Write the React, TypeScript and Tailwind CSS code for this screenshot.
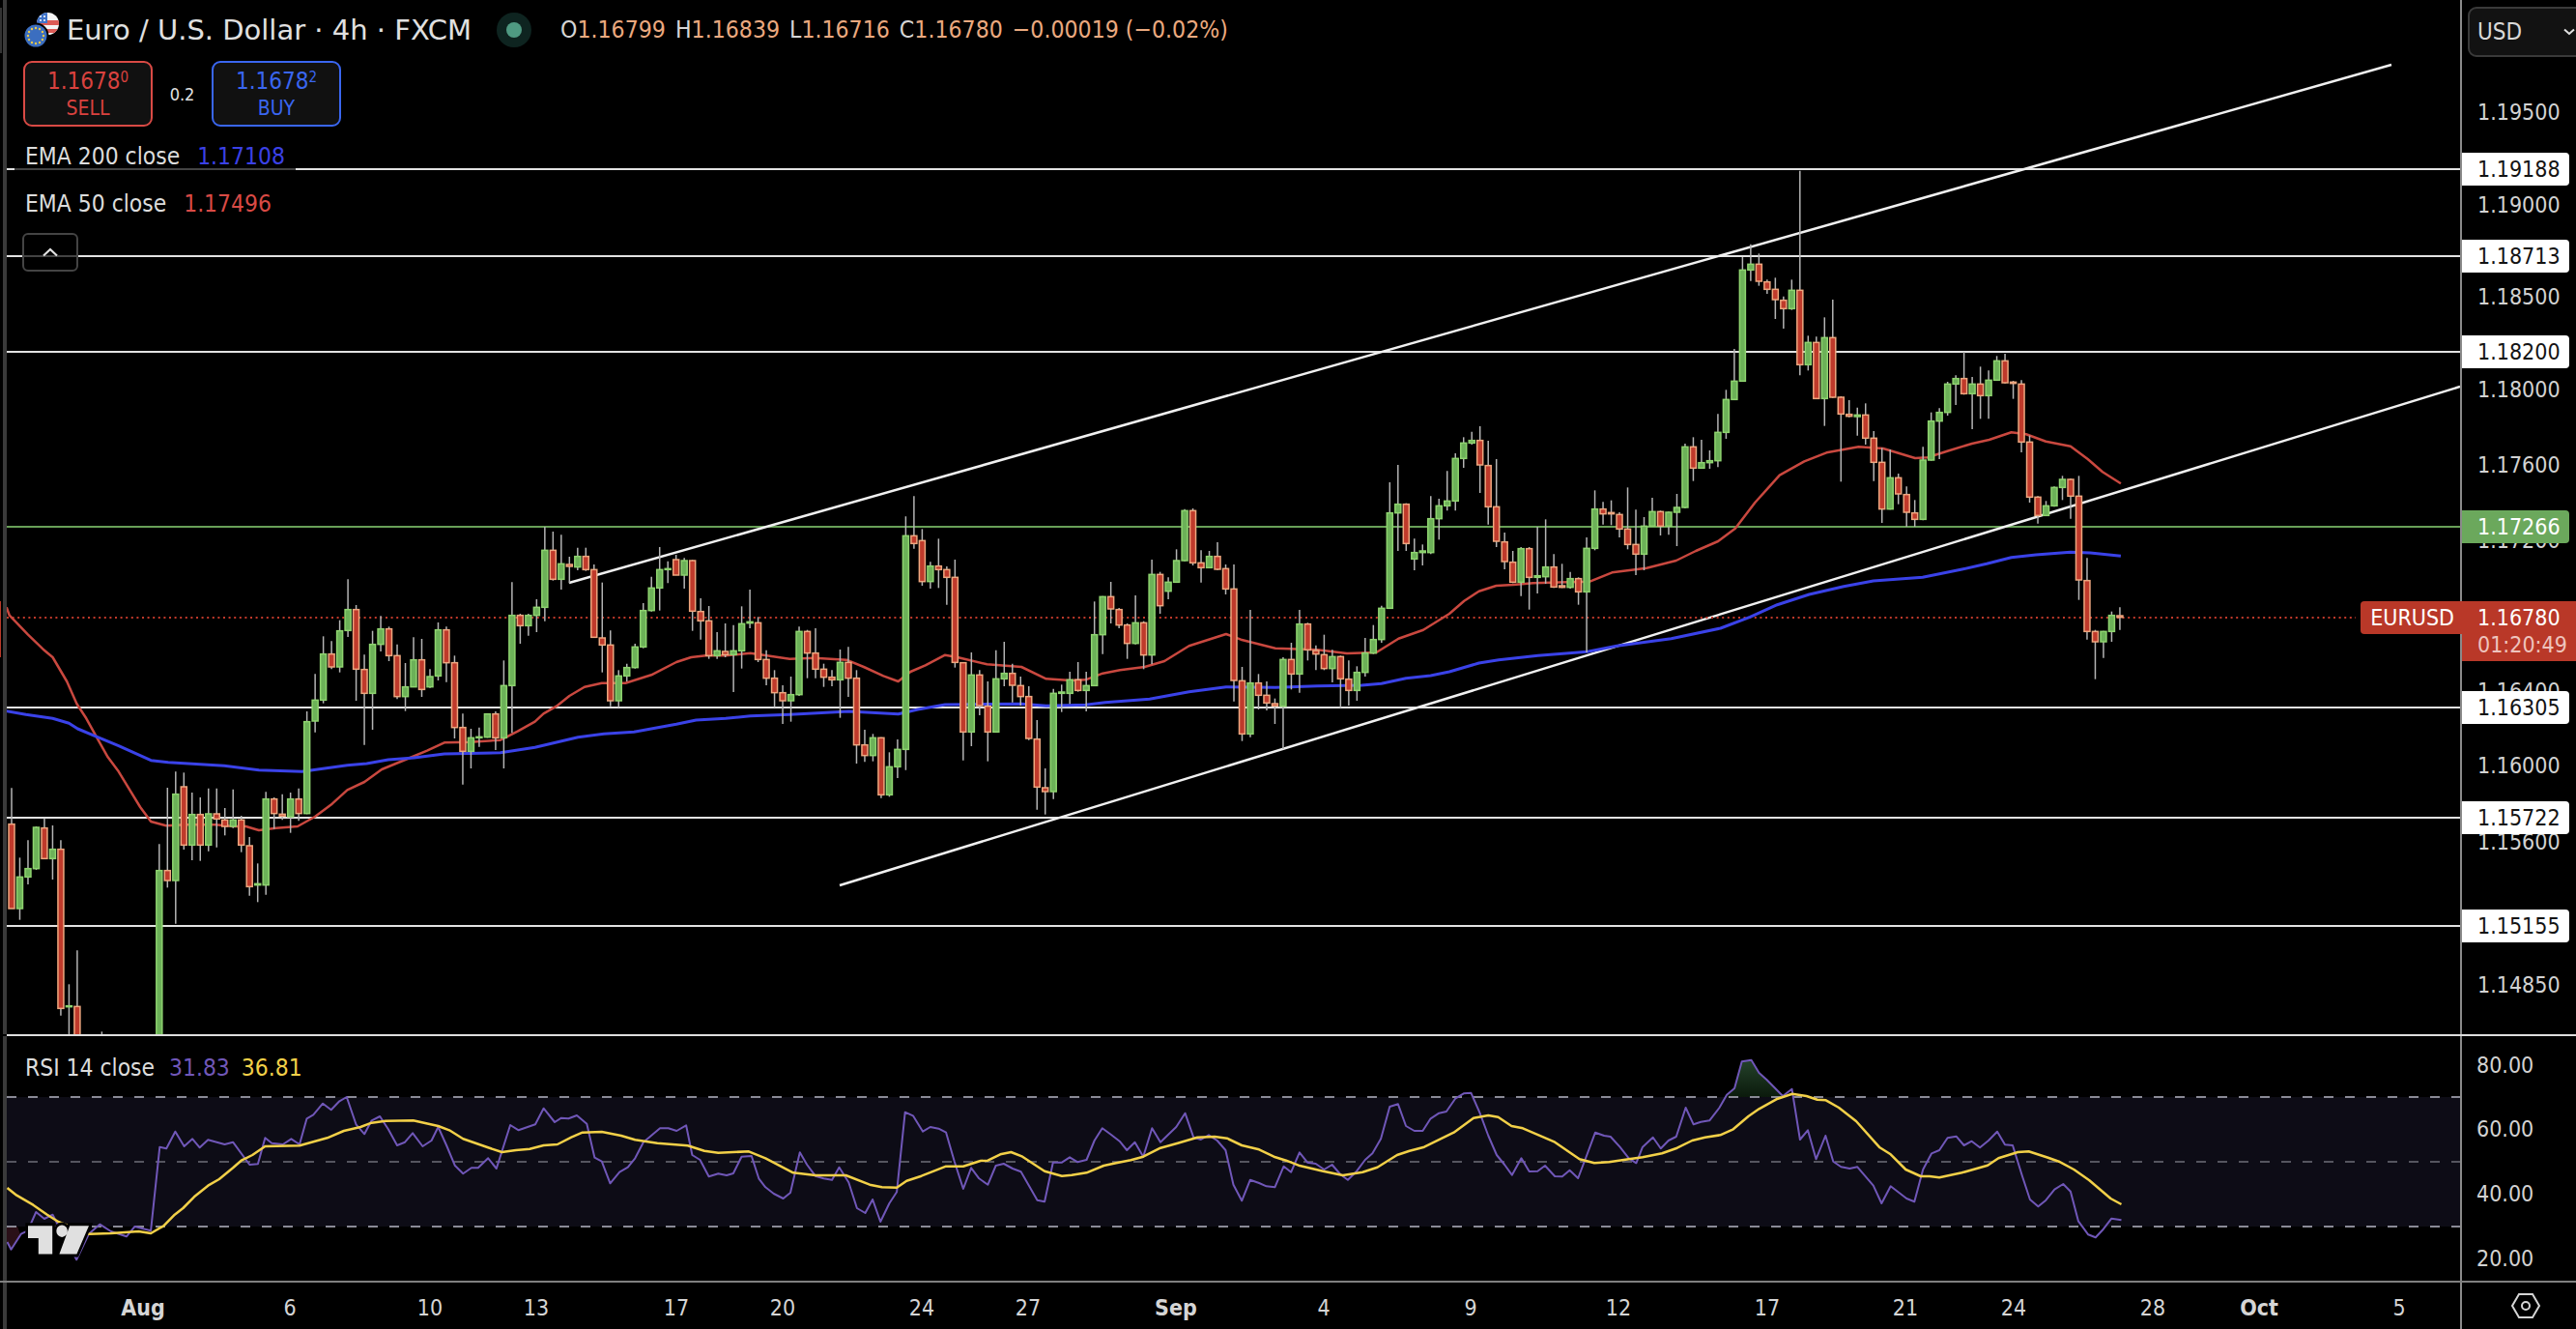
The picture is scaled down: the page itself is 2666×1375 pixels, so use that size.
type Row = [number, number, number, number, number];

// candle rows are [bodyTop, bodyBottom, high, low, up], read off three chart strips
const stripA: Row[] = [
  [878,1140,766,1140,0],[1042,1140,982,1175,1],[1016,1042,928,1065,1],[888,1016,885,1020,1],[890,985,860,985,0],[956,985,882,1050,1],[956,1450,928,1472,0],[1442,1445,1375,1700,1],[1444,1700,1270,1700,0],
  [1600,1700,1600,1700,0],[1600,1700,1600,1700,0],[1600,1700,1522,1700,0],[1600,1700,1600,1700,0],[1600,1700,1600,1700,0],[1600,1700,1600,1700,0],[1600,1700,1600,1700,0],[1600,1700,1600,1700,0],[1600,1700,1600,1700,0],
  [1022,1700,940,1700,1],[1022,1053,765,1075,0],[785,1053,715,1187,1],[762,943,718,957,0],[848,943,780,990,1],[848,943,795,992,0],[846,943,767,962,1],[846,862,767,950,0],[865,885,828,913,0],[865,885,770,890,1],[865,943,852,965,0],[945,1072,918,1100,0],[1063,1067,1000,1120,1],[800,1067,778,1097,1],[800,845,795,893,0],[847,853,785,865,0],[800,855,780,905,1],[800,845,767,868,0],[560,845,528,847,1],[493,558,412,593,1],[350,493,295,503,1],[350,390,310,397,0],[278,390,245,407,1],[212,277,118,297,1],[212,397,198,495,0],[398,472,352,632,0],[320,472,278,585,1],[272,320,232,342,1],[272,355,265,372,0],[355,482,320,490,0],[452,482,378,527,1],[368,452,298,452,1],[368,460,303,483,0],[420,452,397,455,1],[275,418,252,432,1],[275,377,265,437,0],[377,578,355,612,0],[578,652,535,755,0],[610,652,582,705,1],[607,610,578,638,1],[536,608,536,610,1],[536,610,528,648,0],[448,610,370,705,1],[230,448,127,595,1],[230,262,225,318,0],[230,262,225,293,1],[205,230,180,282,1],[28,205,-45,248,1],[28,118,-30,122,0],[70,118,-20,150,1],[72,78,48,130,0],[47,80,20,90,1],[47,88,20,92,0],[88,298,72,300,0],[300,322,128,407,0],[322,495,277,512,0],[418,495,400,515,1],[392,418,380,435,1],[328,392,318,395,1],[215,328,192,332,1],[145,215,110,218,1],[88,145,18,215,1],[85,88,62,130,1],
];
const stripB: Row[] = [
  [297,345,282,345,0],[300,345,292,387,1],[300,457,298,518,0],[458,487,417,545,0],[487,595,441,605,0],[580,595,522,605,1],[582,592,495,600,0],[580,592,500,708,1],[496,580,442,635,1],[490,494,390,510,1],[493,607,475,615,0],[607,665,578,687,0],[665,710,640,755,0],[710,735,687,807,0],[716,735,660,800,1],[520,716,505,720,1],[520,587,515,665,0],[587,637,510,665,0],[637,662,620,692,0],[662,670,640,690,0],[616,670,576,788,1],[616,665,568,723,0],[665,872,640,930,0],[872,905,825,925,0],[850,905,838,923,1],[850,1027,848,1037,0],[940,1027,895,1033,1],[886,940,855,975,1],[223,886,163,950,1],[223,247,100,263,0],[238,365,202,378,0],[317,365,304,387,1],[317,328,232,385,0],[328,352,318,437,0],[352,616,297,632,0],[617,832,615,920,0],[655,832,585,876,1],[655,750,640,780,0],[752,832,675,923,0],[667,832,578,832,1],[650,667,552,690,1],[650,687,620,740,0],[688,722,660,750,0],[722,852,690,857,0],[854,1003,795,1073,0],[1005,1017,945,1088,0],[712,1017,698,1040,1],[708,712,685,770,1],[670,712,645,745,1],[670,703,615,707,0],[688,703,645,768,1],[530,688,427,690,1],[412,530,410,590,1],[412,450,366,495,0],[452,500,447,510,0],[500,557,495,605,0],[493,557,408,560,1],[493,593,488,637,0],[343,593,297,622,1],[343,440,335,465,0],[367,395,352,420,1],[300,367,265,368,1],[145,300,140,302,1],[145,307,138,315,0],[307,322,268,368,0],[287,322,270,323,1],[287,327,243,330,0],[325,388,312,405,0],[388,672,312,737,0],[673,838,630,860,0],[680,838,453,848,1],[680,718,652,762,0],[718,742,675,765,0],[744,751,728,807,0],[607,752,600,885,1],[607,652,555,700,0],[497,652,453,710,1],[497,577,493,610,0],[579,590,563,640,0],[592,635,530,640,0],[598,635,577,678,1],[598,667,595,757,0],[668,703,610,750,0],[647,703,628,735,1],[587,647,540,660,1],[545,587,500,590,1],[448,545,440,555,1],[152,448,57,450,1],[125,152,3,270,1],[125,247,122,270,0],[275,295,232,330,1],[270,275,250,315,1],[170,275,100,280,1],[130,170,108,235,1],[115,130,22,145,1],
];
const stripC: Row[] = [
  [703,835,687,865,1],[655,703,637,732,1],[647,655,620,660,1],[647,723,603,810,0],[725,853,648,908,0],[853,960,705,978,0],[962,1023,933,1047,0],[1025,1087,990,1090,0],[983,1087,978,1130,1],[983,1072,978,1172,0],[1067,1072,915,1122,1],[1040,1070,892,1092,1],[1040,1102,1000,1105,0],[1098,1103,1030,1105,0],[1076,1103,1055,1107,1],[1076,1117,1072,1157,0],[982,1117,948,1305,1],[860,982,802,988,1],[860,875,838,908,0],[871,875,833,910,0],[877,922,870,948,0],[922,970,793,985,0],[970,1000,862,1065,0],[913,1000,885,1050,1],[868,913,825,915,1],[868,913,865,942,0],[870,913,868,940,1],[855,870,813,975,1],[667,855,657,858,1],[667,733,637,773,0],[716,733,645,735,1],[710,716,678,735,1],[622,710,565,730,1],[520,622,490,642,1],[463,520,363,522,1],[118,463,78,465,1],[100,118,38,152,1],[100,153,67,167,0],[155,178,148,192,0],[178,210,142,270,0],[212,238,200,300,0],[181,238,148,242,1],[181,412,-190,445,0],[343,412,322,430,1],[343,517,325,518,0],[328,517,265,602,1],[328,513,210,515,0],[513,565,510,775,0],[566,572,522,575,0],[568,573,545,632,1],[568,640,532,660,0],[640,715,618,773,0],[715,860,670,903,0],[763,860,675,862,1],[763,813,750,845,0],[815,870,790,915,0],[872,892,832,915,0],[708,892,667,895,1],[587,708,560,710,1],[560,587,547,705,1],[472,560,465,570,1],[455,472,445,537,1],[455,502,372,505,0],[472,502,450,612,1],[472,508,418,580,0],[460,508,430,580,1],[400,460,385,462,1],[400,468,378,470,0],[466,470,462,518,0],[472,652,460,684,0],[652,823,632,840,0],[823,880,820,905,0],[850,880,835,882,1],[793,850,790,853,1],[768,793,757,832,1],[768,820,765,890,0],[820,1080,757,1142,0],[1082,1240,1012,1265,0],[1240,1272,1235,1388,0],[1240,1272,1238,1322,1],[1190,1240,1178,1272,1],[1191,1196,1165,1235,0],
];

const toCandles = (rows: Row[], y0: number) =>
  rows.map(([t, b, h, l, up]) => ({ t: y0 + t / 3, b: y0 + b / 3, h: y0 + h / 3, l: y0 + l / 3, up }));

const candles = [...toCandles(stripA, 560), ...toCandles(stripB, 480), ...toCandles(stripC, 240)];

// flat x,y lists in strip coordinates -> page coordinates
const pts = (a: number[], x0: number, sx: number, y0: number) => {
  let out = "";
  for (let i = 0; i < a.length; i += 2) out += `${(x0 + a[i] / sx).toFixed(1)},${(y0 + a[i + 1] / 3).toFixed(1)} `;
  return out;
};

const ema50 =
  pts([15,205,22,230,65,290,100,335,122,360,155,435,178,505,200,550,225,610,250,670,275,715,300,770,325,825,350,870,385,883,430,880,500,880,540,885,570,885,600,897,640,890,690,885,730,855,770,815,805,772,845,747,885,708,945,675,990,650,1030,625,1090,623,1160,617,1200,590,1240,560,1260,535,1290,512,1320,480,1355,452,1395,440,1450,440,1510,415,1568,375], 0, 2.24, 560) +
  pts([30,600,60,595,100,595,150,587,230,605,280,602,345,608,380,630,420,658,450,675,475,645,505,625,545,593,570,600,630,622,700,630,750,667,800,672,830,670,865,650,900,640,950,630,990,612,1040,565,1115,528,1145,545,1215,572,1300,577,1360,588,1420,585,1465,542,1515,515,1568,465], 700, 1.96, 480) +
  pts([30,1145,60,1115,95,1098,130,1095,170,1090,240,1087,285,1085,330,1057,400,1043,460,1020,500,990,545,960,580,920,620,840,670,755,720,712,765,685,830,667,880,672,945,702,970,700,1010,680,1060,657,1095,645,1140,622,1170,628,1210,650,1260,665,1295,705,1325,745,1362,781], 1500, 1.96, 240);

const ema200 =
  pts([15,527,60,538,122,550,160,565,180,582,225,607,275,635,350,680,390,686,520,697,600,710,700,715,805,695,850,690,900,678,960,672,1030,660,1160,656,1240,640,1340,608,1400,598,1470,592,1568,568], 0, 2.24, 560) +
  pts([40,795,100,790,150,782,230,778,350,768,450,776,490,762,545,747,600,746,700,745,750,751,830,748,870,740,960,730,1040,707,1115,692,1215,694,1300,689,1390,687,1430,682,1480,665,1530,657,1568,645], 700, 1.96, 480) +
  pts([60,1338,100,1328,180,1315,280,1303,340,1285,450,1262,550,1230,610,1195,665,1157,730,1125,800,1100,860,1083,960,1072,1040,1047,1090,1030,1140,1010,1190,1002,1260,994,1300,996,1362,1006], 1500, 1.96, 240);

const rsi =
  pts([13,675,20,698,38,650,50,640,65,582,80,603,95,590,110,640,138,730,160,650,180,620,200,642,228,658,243,627,272,640,288,380,300,385,316,332,332,378,347,355,360,382,375,358,405,372,420,365,450,435,465,433,478,352,490,368,510,372,525,355,540,372,553,292,565,280,582,245,597,265,612,238,625,225,642,310,657,340,670,298,685,285,700,325,716,375,730,365,744,337,762,378,778,360,790,318,805,375,820,437,835,463,850,445,862,445,880,415,895,447,920,312,935,328,965,310,980,260,1000,303,1012,290,1025,292,1040,282,1058,308,1072,413,1085,425,1100,493,1117,458,1132,443,1145,415,1160,365,1190,322,1205,322,1220,330,1237,313,1248,405,1262,420,1278,472,1295,463,1310,468,1322,462,1337,410,1355,408,1368,478,1380,505,1395,525,1412,540,1425,522,1442,397,1455,435,1470,470,1485,478,1500,482,1513,443,1530,490,1545,570,1560,585], 0, 1.742, 1060) +
  pts([6,543,22,612,40,555,55,520,72,272,88,283,108,332,123,318,140,323,155,335,172,425,190,510,206,445,222,478,240,497,256,438,272,432,290,447,307,457,325,505,340,545,355,550,372,428,390,428,406,412,422,427,440,420,456,360,472,322,490,342,507,362,522,390,538,365,555,410,573,322,590,365,605,343,622,318,640,275,657,350,672,357,688,343,705,360,722,390,738,497,755,547,772,482,790,492,805,502,822,505,840,440,855,458,872,397,888,428,905,432,922,450,938,435,955,465,970,482,988,455,1005,420,1020,400,1037,355,1055,255,1072,247,1088,315,1105,330,1122,330,1138,292,1155,275,1170,270,1188,230,1205,214,1220,212,1238,275,1255,345,1272,405,1288,435,1303,467,1322,415,1338,456,1355,455,1370,438,1390,471,1405,472,1420,452,1437,477,1455,405,1472,335,1490,345,1503,348,1522,380,1540,415,1555,430,1568,380], 900, 1.96, 1060) +
  pts([24,350,42,385,60,360,78,348,100,258,118,310,135,302,155,298,178,258,195,218,213,198,230,115,252,110,270,150,288,172,325,222,346,200,365,357,383,328,402,418,424,345,442,425,460,442,480,447,498,442,535,500,554,555,575,502,612,540,630,550,650,450,670,400,688,390,707,352,727,347,745,375,763,362,782,382,802,360,822,332,840,373,858,375,880,470,898,543,917,565,935,545,955,512,975,495,992,518,1010,610,1033,652,1050,661,1068,635,1087,602,1110,607], 1700, 2.24, 1060);

const rsiMa =
  pts([13,507,30,530,60,560,85,590,105,612,160,650,200,648,250,642,272,648,295,625,315,590,330,570,350,535,375,500,395,480,420,445,435,422,455,405,478,378,540,376,590,352,620,330,650,318,670,305,695,299,745,298,790,315,810,328,835,355,880,382,905,396,930,390,955,386,980,375,1005,372,1030,350,1050,335,1085,333,1120,345,1145,358,1185,368,1240,376,1270,392,1295,398,1350,394,1380,415,1430,460,1470,468,1525,468,1568,497], 0, 1.742, 1060) +
  pts([25,505,55,506,75,485,105,470,155,440,190,440,225,423,240,422,265,403,287,396,310,410,355,455,390,470,410,467,440,460,475,438,500,430,530,421,555,410,590,383,625,368,665,350,700,348,725,353,755,375,790,388,820,410,845,422,870,437,920,455,960,468,1000,458,1030,443,1070,405,1095,392,1125,380,1185,335,1225,290,1255,282,1275,287,1302,315,1325,322,1390,365,1440,418,1470,430,1500,427,1540,418,1568,412], 900, 1.96, 1060) +
  pts([45,400,80,383,115,360,145,350,180,343,210,325,245,285,270,262,310,232,347,215,380,222,405,233,425,235,455,258,495,300,550,382,575,403,610,450,645,471,665,471,688,475,740,460,800,437,825,415,870,396,895,394,940,413,965,425,1000,450,1035,483,1085,540,1110,558], 1700, 2.24, 1060);

const levels = [
  { y: 175, text: "1.19188" },
  { y: 265, text: "1.18713" },
  { y: 364, text: "1.18200" },
  { y: 732, text: "1.16305" },
  { y: 846, text: "1.15722" },
  { y: 958, text: "1.15155" },
];

const ticks = [
  { y: 116, text: "1.19500" },
  { y: 212, text: "1.19000" },
  { y: 307, text: "1.18500" },
  { y: 403, text: "1.18000" },
  { y: 481, text: "1.17600" },
  { y: 559, text: "1.17200" },
  { y: 715, text: "1.16400" },
  { y: 792, text: "1.16000" },
  { y: 871, text: "1.15600" },
  { y: 1019, text: "1.14850" },
];

const rsiTicks = [
  { y: 1102, text: "80.00" },
  { y: 1168, text: "60.00" },
  { y: 1235, text: "40.00" },
  { y: 1302, text: "20.00" },
];

const dates = [
  { x: 148, text: "Aug", bold: true },
  { x: 300, text: "6" },
  { x: 445, text: "10" },
  { x: 555, text: "13" },
  { x: 700, text: "17" },
  { x: 810, text: "20" },
  { x: 954, text: "24" },
  { x: 1064, text: "27" },
  { x: 1217, text: "Sep", bold: true },
  { x: 1370, text: "4" },
  { x: 1522, text: "9" },
  { x: 1675, text: "12" },
  { x: 1829, text: "17" },
  { x: 1972, text: "21" },
  { x: 2084, text: "24" },
  { x: 2228, text: "28" },
  { x: 2338, text: "Oct", bold: true },
  { x: 2483, text: "5" },
];

function FlagIcon() {
  return (
    <svg width="37" height="36" viewBox="0 0 37 36">
      <defs>
        <clipPath id="us">
          <circle cx="24.5" cy="11.5" r="11.5" />
        </clipPath>
      </defs>
      <g clipPath="url(#us)">
        <rect x="12" y="0" width="25" height="24" fill="#f4f4f4" />
        <rect x="12" y="8" width="25" height="5" fill="#dc5a55" />
        <rect x="12" y="17" width="25" height="4" fill="#dc5a55" />
        <rect x="12" y="0" width="12" height="11" fill="#3f73c8" />
        <circle cx="17" cy="4" r="1" fill="#fff" />
        <circle cx="21" cy="4" r="1" fill="#fff" />
        <circle cx="17" cy="8" r="1" fill="#fff" />
        <circle cx="21" cy="8" r="1" fill="#fff" />
      </g>
      <circle cx="12" cy="24" r="12.5" fill="#3b6ec0" stroke="#000" strokeWidth="2" />
      {[0, 30, 60, 90, 120, 150, 180, 210, 240, 270, 300, 330].map((a) => (
        <circle
          key={a}
          cx={12 + 8 * Math.cos((a * Math.PI) / 180)}
          cy={24 + 8 * Math.sin((a * Math.PI) / 180)}
          r="1.2"
          fill="#e8c84a"
        />
      ))}
    </svg>
  );
}

function Legend() {
  return (
    <div className="absolute left-[8px] top-[13px] flex flex-col">
      <div className="flex h-[36px] items-center pl-[10px]">
        <FlagIcon />
        <span className="ml-[7px] w-[445px] whitespace-nowrap pt-[2px] text-[29px] font-stretch-normal text-[#e0e0e0]">Euro / U.S. Dollar · 4h · FXCM</span>
        <span className="flex h-[36px] w-[36px] items-center justify-center rounded-full bg-[#0e2420]">
          <span className="h-[16px] w-[16px] rounded-full bg-[#4f9a82]" />
        </span>
        <span className="ml-[30px] flex gap-[10px] whitespace-nowrap text-[24.6px] text-[#eba97f]">
          <span><span className="text-[#d5d5d5]">O</span>1.16799</span>
          <span><span className="text-[#d5d5d5]">H</span>1.16839</span>
          <span><span className="text-[#d5d5d5]">L</span>1.16716</span>
          <span><span className="text-[#d5d5d5]">C</span>1.16780</span>
          <span>−0.00019 (−0.02%)</span>
        </span>
      </div>
      <div className="mt-[14px] ml-[9px] flex h-[68px] items-center">
        <div className="flex h-[68px] w-[134px] flex-col items-center justify-center rounded-[9px] border-2 border-[#d94a45] bg-[#111] text-[#d9423f]">
          <span className="text-[24px] leading-[30px]">1.1678<sup className="text-[15px]">0</sup></span>
          <span className="text-[21px] leading-[26px]">SELL</span>
        </div>
        <span className="w-[61px] text-center text-[18px] text-[#e0e0e0]">0.2</span>
        <div className="flex h-[68px] w-[134px] flex-col items-center justify-center rounded-[9px] border-2 border-[#3a66f0] bg-[#111] text-[#3a66f0]">
          <span className="text-[24px] leading-[30px]">1.1678<sup className="text-[15px]">2</sup></span>
          <span className="text-[21px] leading-[26px]">BUY</span>
        </div>
      </div>
      <div className="mt-[16px] flex h-[29px] w-[291px] items-center gap-[18px] bg-black/70 pl-[11px] pt-[2px] text-[24.4px]">
        <span className="text-[#dcdcdc]">EMA 200 close</span>
        <span className="text-[#3b41e6]">1.17108</span>
      </div>
      <div className="mt-[20px] flex h-[29px] w-fit items-center gap-[18px] pl-[11px] pt-[1px] text-[24.4px]">
        <span className="text-[#dcdcdc]">EMA 50 close</span>
        <span className="text-[#d94a45]">1.17496</span>
      </div>
      <div className="mt-[16px] ml-[8px] flex h-[40px] w-[58px] items-center justify-center rounded-[6px] border-2 border-[#444] bg-black/70">
        <svg width="18" height="10" viewBox="0 0 18 10" fill="none" stroke="#e0e0e0" strokeWidth="2.2">
          <path d="M2 8.5 9 2l7 6.5" />
        </svg>
      </div>
    </div>
  );
}

function MainChart() {
  return (
    <svg width="2539" height="1070" viewBox="7 0 2539 1070" className="block">
      {levels.map((l) => (
        <line key={l.y} x1="7" x2="2546" y1={l.y} y2={l.y} stroke="#e2e2e2" strokeWidth="2" />
      ))}
      <line x1="7" x2="2546" y1="545" y2="545" stroke="#689f57" strokeWidth="2" />
      <line x1="589" y1="603" x2="2475" y2="67" stroke="#f0f0f0" strokeWidth="2.5" />
      <line x1="869" y1="916" x2="2546" y2="400" stroke="#f0f0f0" strokeWidth="2.5" />
      <line x1="7" x2="2438" y1="639" y2="639" stroke="#c0392b" strokeWidth="2" strokeDasharray="2 3.6" />
      <polyline points={ema50} fill="none" stroke="#c9483f" strokeWidth="2.5" strokeLinejoin="round" />
      <polyline points={ema200} fill="none" stroke="#3a42e8" strokeWidth="3" strokeLinejoin="round" />
      {candles.map((c, i) => {
        const x = 12 + i * 8.49;
        return (
          <g key={i}>
            <line x1={x} x2={x} y1={c.h} y2={c.l} stroke="#b4b4b4" strokeWidth="1.5" />
            <rect
              x={x - 3}
              y={c.t}
              width="6"
              height={Math.max(c.b - c.t, 1)}
              fill={c.up ? "#6cb158" : "#bf3a2b"}
              stroke={c.up ? "#8ed36f" : "#eda77f"}
              strokeWidth="1.5"
            />
          </g>
        );
      })}
    </svg>
  );
}

function RsiChart() {
  return (
    <svg width="2539" height="253" viewBox="7 1072 2539 253" className="block">
      <defs>
        <linearGradient id="ob" x1="0" y1="0" x2="0" y2="1">
          <stop offset="0" stopColor="#24422a" />
          <stop offset="1" stopColor="#0b1a0c" />
        </linearGradient>
      </defs>
      <rect x="7" y="1135" width="2539" height="134" fill="#0d0c16" />
      <polygon points="1787,1135 1795,1126 1803,1098 1812,1097 1820,1110 1829,1117 1845,1135" fill="url(#ob)" />
      <polygon points="7,1269 18,1269 21,1277 11,1293 7,1285" fill="#2a1018" />
      <line x1="7" x2="2546" y1="1135" y2="1135" stroke="#8a8a96" strokeWidth="2" strokeDasharray="10 12" />
      <line x1="7" x2="2546" y1="1202" y2="1202" stroke="#55555f" strokeWidth="2" strokeDasharray="10 12" />
      <line x1="7" x2="2546" y1="1269" y2="1269" stroke="#8a8a96" strokeWidth="2" strokeDasharray="10 12" />
      <polyline points={rsi} fill="none" stroke="#7057b8" strokeWidth="2" strokeLinejoin="round" />
      <polyline points={rsiMa} fill="none" stroke="#f2d048" strokeWidth="2.5" strokeLinejoin="round" />
      <g transform="translate(29 1256.5) scale(1.8 1.95)">
        <path
          d="M14 6H0v6.5h6V21h8zM35 6l-7 15H18l6-15zM19.5 12a3.2 3.2 0 1 0 0-6.4 3.2 3.2 0 0 0 0 6.4z"
          fill="#e0e0e0"
          stroke="#000"
          strokeWidth="3"
          paintOrder="stroke"
        />
      </g>
    </svg>
  );
}

function PriceAxis() {
  return (
    <div className="relative w-[120px] border-l-2 border-[#8a8a8a] text-[23px] text-[#d2d2d2]">
      <div className="absolute left-[6px] top-[7px] flex h-[52px] w-[120px] items-center rounded-[9px] border-2 border-[#3a3a3a] bg-[#121212] pl-[8px] text-[24px] text-[#d8d8d8]">
        USD
        <svg width="12" height="8" viewBox="0 0 12 8" fill="none" stroke="#e0e0e0" strokeWidth="2" className="ml-[43px]">
          <path d="M1 1.5 6 6l5-4.5" />
        </svg>
      </div>
      {ticks.map((t) => (
        <span key={t.text} className="absolute left-[16px] -translate-y-1/2 leading-[30px]" style={{ top: t.y }}>
          {t.text}
        </span>
      ))}
      {levels.map((l) => (
        <span
          key={l.text}
          className="absolute left-0 flex h-[34px] w-[111px] -translate-y-1/2 items-center rounded-r-[4px] bg-white pl-[16px] text-[#131313]"
          style={{ top: l.y }}
        >
          {l.text}
        </span>
      ))}
      <span className="absolute left-0 top-[528px] flex h-[34px] w-[111px] items-center rounded-r-[4px] bg-[#6ba85c] pl-[16px] text-white">
        1.17266
      </span>
      <div className="absolute left-0 top-[622px] flex h-[62px] w-[120px] flex-col bg-[#b93828] pl-[16px] leading-[30px] text-white">
        <span className="h-[32px] leading-[34px]">1.16780</span>
        <span className="leading-[26px] text-[#eec4bd]">01:20:49</span>
      </div>
      <span className="absolute right-[118px] top-[622px] flex h-[34px] items-center rounded-l-[4px] bg-[#b93828] pl-[10px] pr-[8px] text-white">
        EURUSD
      </span>
    </div>
  );
}

function RsiAxis() {
  return (
    <div className="relative w-[120px] border-l-2 border-[#8a8a8a] text-[23px] text-[#d2d2d2]">
      {rsiTicks.map((t) => (
        <span key={t.text} className="absolute left-[15px] -translate-y-1/2 leading-[30px]" style={{ top: t.y - 1072 }}>
          {t.text}
        </span>
      ))}
    </div>
  );
}

export default function App() {
  return (
    <div className="relative flex h-[1375px] w-[2666px] flex-col overflow-hidden bg-black font-['DejaVu_Sans',sans-serif] font-stretch-condensed">
      <div className="absolute left-0 top-[8px] h-[47px] w-[2px] bg-[#333]" />
      <div className="absolute left-0 top-[622px] h-[58px] w-[1px] bg-[#b93828]" />
      <div className="flex h-[1070px]">
        <div className="relative ml-[3px] w-[2543px] border-l-4 border-[#3a3a3a]">
          <MainChart />
          <Legend />
        </div>
        <PriceAxis />
      </div>
      <div className="ml-[7px] h-[2px] bg-[#dedede]" />
      <div className="flex h-[253px]">
        <div className="relative ml-[3px] w-[2543px] border-l-4 border-[#3a3a3a]">
          <RsiChart />
          <span className="absolute left-[19px] top-[18px] flex h-[30px] items-center gap-[15px] text-[24.4px]">
            <span className="text-[#dcdcdc]">RSI 14 close</span>
            <span className="text-[#7057b8]">31.83</span>
            <span className="-ml-[3px] text-[#f2d048]">36.81</span>
          </span>
        </div>
        <RsiAxis />
      </div>
      <div className="flex h-[50px] border-t-2 border-[#808080] text-[23px] text-[#d5d5d5]">
        <div className="relative w-[2546px]">
          <div className="absolute left-[3px] top-0 h-[48px] w-[4px] bg-[#3a3a3a]" />
          {dates.map((d) => (
            <span
              key={d.x}
              className={d.bold ? "absolute top-[11px] -translate-x-1/2 leading-[30px] font-bold" : "absolute top-[11px] -translate-x-1/2 leading-[30px]"}
              style={{ left: d.x }}
            >
              {d.text}
            </span>
          ))}
        </div>
        <div className="flex w-[120px] items-center border-l-2 border-[#8a8a8a] pl-[50px]">
          <svg width="32" height="28" viewBox="0 0 32 28" fill="none" stroke="#d5d5d5" strokeWidth="2">
            <path d="M9 2h14l7 12-7 12H9L2 14z" />
            <circle cx="16" cy="14" r="4" />
          </svg>
        </div>
      </div>
    </div>
  );
}
